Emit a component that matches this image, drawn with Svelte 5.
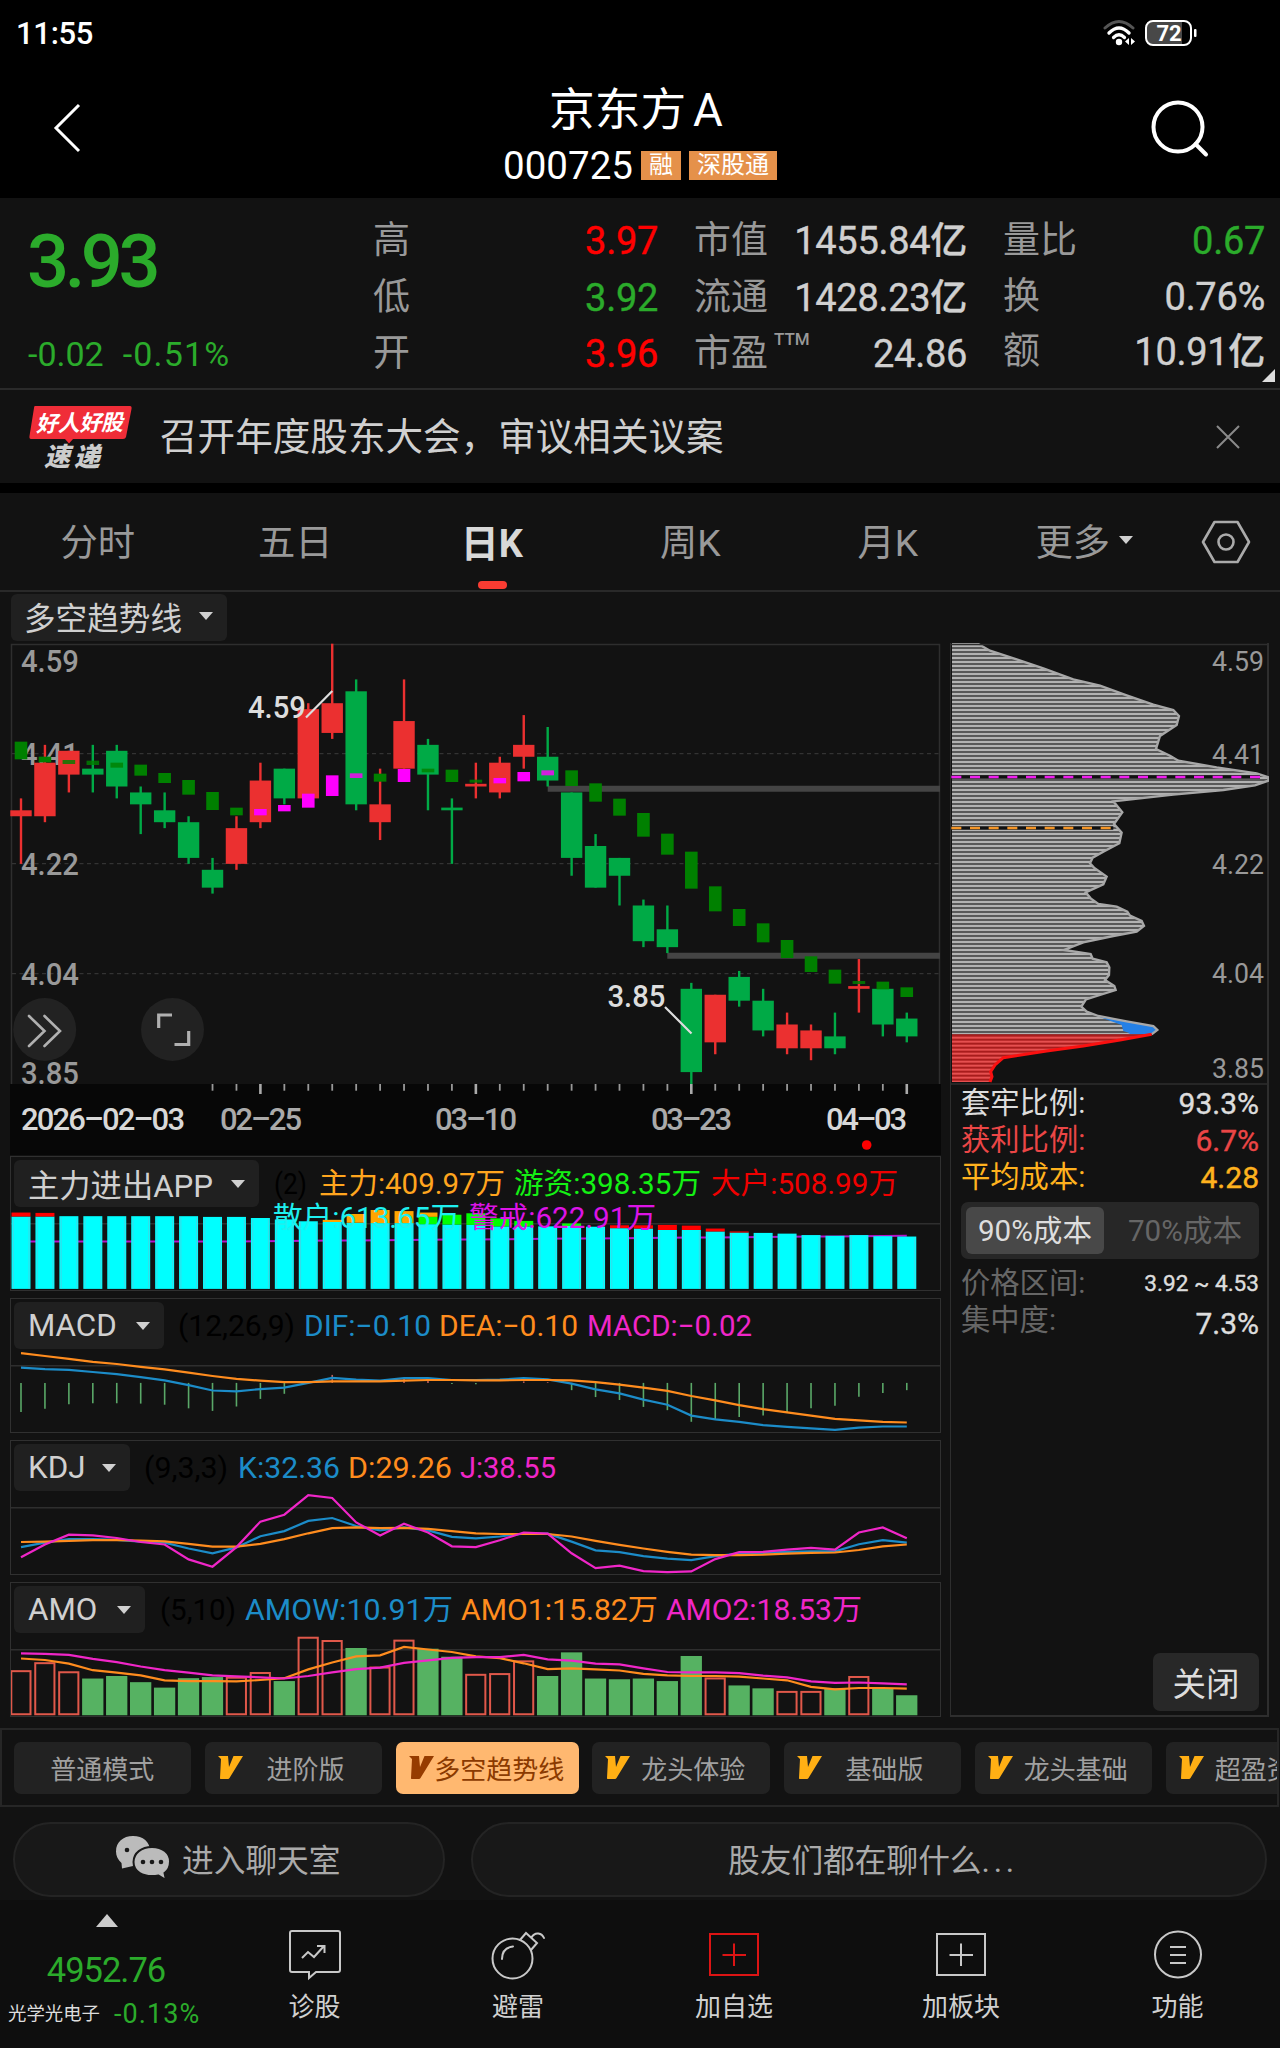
<script>
    const STEP = 23.94;
    const cx = (i) => 21 + i * STEP;
    const priceY = (p) => 643.7 + (459 - p) * 5.95;

    // [up, high, body top, body bottom, low] in cents
    const candles = [
        [1, 433, 431, 430, 422], [1, 442, 439, 430, 429], [1, 441, 441, 437, 434], [0, 442, 438, 437, 434],
        [0, 442, 441, 435, 433], [0, 435, 434, 432, 427], [0, 434, 431, 429, 428], [0, 430, 429, 423, 422],
        [0, 423, 421, 418, 417], [1, 430, 428, 422, 421], [1, 439, 436, 429, 428], [0, 438, 438, 433, 432],
        [1, 449, 448, 433, 433], [1, 459, 449, 444, 443], [0, 453, 451, 432, 431], [1, 438, 432, 429, 426],
        [1, 453, 446, 438, 438], [0, 443, 442, 437, 431], [0, 433, 431, 431, 422], [1, 439, 435, 435, 433],
        [1, 440, 439, 434, 433], [1, 447, 442, 440, 438], [0, 445, 440, 436, 435], [0, 434, 434, 423, 420],
        [0, 427, 425, 418, 418], [0, 423, 423, 420, 415], [0, 416, 415, 409, 408], [0, 415, 411, 408, 407],
        [0, 402, 401, 387, 385], [1, 400, 400, 392, 390], [0, 404, 403, 399, 398], [0, 401, 399, 394, 393],
        [1, 397, 395, 391, 390], [1, 395, 394, 391, 389], [0, 397, 393, 391, 390], [1, 406, 401, 401, 397],
        [0, 401, 401, 395, 393], [0, 397, 396, 393, 392]
    ];

    // trend blocks: [top, bottom, rising]
    const trend = [
        [335, 388], [380, 397], [390, 402], [392, 405], [398, 413], [404, 437], [429, 459], [450, 494],
        [486, 540], [533, 556], [537, 556, 1], [525, 544, 1], [491, 533, 1], [436, 498, 1], [430, 444, 1],
        [431, 455], [417, 456, 1], [416, 427], [419, 456], [449, 458], [444, 460, 1], [426, 454, 1],
        [421, 436, 1], [421, 468], [460, 515], [506, 557], [549, 620], [611, 674], [665, 776], [769, 844],
        [837, 888], [880, 937], [930, 984], [979, 1026], [1019, 1061], [1053, 1062], [1055, 1078], [1072, 1101]
    ];

    const axisLabels = [["4.59", 672], ["4.41", 764.5], ["4.22", 875], ["4.04", 985], ["3.85", 1083.5]];
    const costLabels = [["4.59", 670.7], ["4.41", 764], ["4.22", 874.3], ["4.04", 983.3], ["3.85", 1077.7]];
    const dates = [
        ["2026-02-03", 21, 164, "#d8d8d8"],
        ["02-25", 220, 82, "#aaa"],
        ["03-10", 435, 82, "#aaa"],
        ["03-23", 651, 81, "#aaa"],
        ["04-03", 826, 81, "#d8d8d8"]
    ];
    const ticks = Array.from({ length: 30 }, (_, k) => k + 8);

    // chip distribution outline
    const grayPts = "36,42 115,42 150,62 230,88 310,115 400,148 480,167 560,196 640,224 700,240 717,258 710,285 660,318 648,357 690,377 715,392 830,412 950,430 985,442 985,452 945,466 850,480 700,494 520,514 547,547 522,582 545,608 538,640 490,665 458,683 450,700 462,713 500,740 490,763 437,787 452,805 475,822 530,830 562,845 570,857 605,873 612,888 590,905 520,918 430,937 372,960 452,972 458,986 500,997 508,1012 507,1035 495,1050 523,1068 527,1080 480,1095 438,1108 424,1130 440,1145 475,1158 560,1174 640,1188 652,1200 635,1213";
    const redPts = "635,1213 540,1230 430,1248 320,1263 190,1283 165,1305 152,1325 156,1340 150,1356";
    const stripes = Array.from({ length: 110 }, (_, k) => 44 + k * 12);

    const SCALE = 134.5 / 370;
    const points = (vals, base) => vals.map((v, i) => `${(i * STEP + 10).toFixed(1)},${((v - base) * SCALE - 0.8).toFixed(1)}`).join(" ");

    const cyan = [183, 183, 182, 182, 182, 182, 182, 182, 184, 184, 187, 191, 196, 198, 200, 201, 201, 204, 205, 206, 210, 210, 210, 209, 211, 215, 216, 220, 220, 224, 227, 228, 230, 234, 236, 234, 237, 238];
    const caps = [
        [0, 172, 183, "#f00"], [1, 173, 183, "#f00"], [13, 192, 198, "#ffa500"], [14, 176, 200, "#ffa500"],
        [15, 165, 201, "#ffa500"], [16, 168, 201, "#ffa500"], [17, 172, 184, "#ffa500"], [17, 184, 204, "#0f0"],
        [18, 178, 205, "#0f0"], [19, 174, 206, "#0f0"], [20, 188, 210, "#0f0"], [21, 195, 210, "#0f0"],
        [23, 202, 209, "#0f0"], [25, 207, 215, "#f00"], [26, 207, 216, "#f00"], [27, 206, 220, "#f00"],
        [28, 208, 220, "#f00"], [29, 216, 224, "#f00"], [30, 224, 227, "#f00"]
    ];
    const warn = cyan.map((_, i) => (i < 9 ? 252 : 252 - (i - 8) * 0.55));

    const dea = [558, 566, 574, 582, 588, 596, 603, 612, 621, 629, 634, 638, 638, 636, 636, 636, 634, 632, 632, 633, 633, 632, 632, 633, 638, 645, 653, 662, 676, 688, 701, 712, 721, 730, 739, 743, 747, 749];
    const dif = [598, 602, 604, 610, 616, 624, 633, 646, 661, 663, 657, 653, 640, 626, 631, 634, 627, 627, 632, 632, 631, 627, 630, 642, 658, 669, 686, 700, 730, 740, 747, 756, 761, 765, 769, 763, 760, 760];
    const hist = [720, 711, 699, 696, 696, 697, 700, 710, 717, 705, 684, 670, 640, 618, 640, 640, 627, 634, 643, 644, 640, 636, 638, 660, 679, 687, 706, 715, 747, 741, 734, 730, 720, 710, 703, 678, 668, 660];

    const kLine = [1092, 1080, 1070, 1070, 1072, 1077, 1080, 1096, 1109, 1093, 1062, 1048, 1020, 1012, 1034, 1046, 1038, 1046, 1064, 1068, 1063, 1055, 1055, 1077, 1101, 1106, 1117, 1124, 1128, 1117, 1110, 1108, 1105, 1104, 1104, 1084, 1073, 1080];
    const dLine = [1078, 1077, 1075, 1073, 1073, 1074, 1076, 1083, 1091, 1091, 1083, 1070, 1054, 1040, 1038, 1040, 1039, 1042, 1048, 1054, 1056, 1056, 1056, 1063, 1075, 1086, 1096, 1105, 1113, 1114, 1114, 1113, 1110, 1108, 1107, 1100, 1090, 1085];
    const jLine = [1120, 1085, 1058, 1060, 1067, 1078, 1085, 1126, 1146, 1092, 1022, 1003, 949, 957, 1024, 1060, 1028, 1052, 1090, 1092, 1073, 1052, 1055, 1109, 1150, 1143, 1158, 1161, 1159, 1125, 1106, 1105, 1099, 1094, 1099, 1052, 1038, 1068];

    const amo = [1430, 1408, 1433, 1453, 1446, 1463, 1478, 1452, 1449, 1448, 1435, 1460, 1338, 1347, 1369, 1420, 1346, 1371, 1393, 1440, 1438, 1403, 1446, 1381, 1453, 1455, 1453, 1460, 1391, 1450, 1472, 1480, 1487, 1487, 1480, 1446, 1480, 1499];
    const amoUp = [0, 1, 2, 9, 10, 12, 13, 15, 16, 19, 20, 21, 29, 32, 33, 35];
    const amo1 = [1398, 1402, 1412, 1430, 1437, 1444, 1458, 1460, 1460, 1461, 1457, 1452, 1428, 1409, 1392, 1389, 1366, 1373, 1380, 1392, 1397, 1411, 1427, 1425, 1428, 1431, 1440, 1444, 1446, 1446, 1448, 1453, 1458, 1476, 1483, 1479, 1479, 1481];
    const amo2 = [1384, 1385, 1388, 1399, 1408, 1420, 1430, 1437, 1444, 1447, 1450, 1453, 1446, 1436, 1427, 1423, 1410, 1403, 1396, 1394, 1394, 1388, 1400, 1404, 1412, 1414, 1425, 1435, 1436, 1436, 1438, 1445, 1450, 1461, 1465, 1464, 1466, 1469];

    const blue = "#1c8cc8";
    const orange = "#ff8c1e";
    const pink = "#f026c8";

    // legend entries: [text, x, width, colour, second row]
    const panels = [
        {
            id: "flow", name: "主力进出APP", width: 245, base: 17,
            legend: [
                ["(2)", 263, 33, "#000"], ["主力:409.97万", 308, 186, "#ffa51e"], ["游资:398.35万", 503, 187, "#14f014"],
                ["大户:508.99万", 700, 187, "#f00000"], ["散户:613.65万", 262, 187, "#1ef0f0", 1], ["警戒:622.91万", 458, 187, "#dc14e6", 1]
            ],
            lines: []
        },
        {
            id: "macd", name: "MACD", width: 150, base: 407,
            legend: [["(12,26,9)", 167, 117, "#000"], ["DIF:−0.10", 293, 127, blue], ["DEA:−0.10", 428, 139, orange], ["MACD:−0.02", 576, 165, pink]],
            lines: [[dif, blue], [dea, orange]]
        },
        {
            id: "kdj", name: "KDJ", width: 116, base: 798,
            legend: [["(9,3,3)", 133, 84, "#000"], ["K:32.36", 227, 102, blue], ["D:29.26", 337, 104, orange], ["J:38.55", 449, 96, pink]],
            lines: [[kLine, blue], [dLine, orange], [jLine, pink]]
        },
        {
            id: "amo", name: "AMO", width: 131, base: 1188,
            legend: [["(5,10)", 149, 76, "#000"], ["AMOW:10.91万", 234, 208, blue], ["AMO1:15.82万", 450, 197, orange], ["AMO2:18.53万", 655, 196, pink]],
            lines: [[amo1, orange], [amo2, pink]]
        }
    ];

    const tabs = ["分时", "五日", "日K", "周K", "月K"];
    let tab = "日K";

    const modes = ["普通模式", "进阶版", "多空趋势线", "龙头体验", "基础版", "龙头基础", "超盈资金"];
    let mode = "多空趋势线";
</script>

<div class="app">
    <header>
        <div class="status">
            <span class="clock">11:55</span>
            <svg class="wifi" width="34" height="28" viewBox="0 0 34 28" fill="none" stroke-linecap="round">
                <path d="M2 9 Q16 -4 30 9" stroke="#555" stroke-width="3" />
                <path d="M6 14 Q16 4 26 14" stroke="#fff" stroke-width="3.4" />
                <path d="M10.500 18.500 Q16 13 21.500 18.500" stroke="#fff" stroke-width="3.2" />
                <circle cx="16" cy="23" r="3.200" fill="#fff" />
                <path d="M26 19v7l-4-3.500zM28 19v7l4-3.500z" fill="#fff" />
            </svg>
            <svg class="battery" width="54" height="28" viewBox="0 0 54 28">
                <path d="M8 3H38V25H8Q3 25 3 20V8Q3 3 8 3Z" fill="#484848" />
                <rect x="2" y="2" width="45" height="24" rx="7" fill="none" stroke="#fff" stroke-width="2" />
                <rect x="50" y="10" width="2.500" height="8" rx="1" fill="#fff" />
                <text x="25" y="22" text-anchor="middle" font-size="22" font-weight="700" fill="#fff">72</text>
            </svg>
        </div>
        <div class="titlebar">
            <svg width="80" height="60" viewBox="0 0 80 60" fill="none" stroke="#fff" stroke-width="3">
                <path d="M66 7 43 30 66 53" />
            </svg>
            <div class="title">
                <h1>京东方<span>A</span></h1>
                <div class="code">000725 <em>融</em><em>深股通</em></div>
            </div>
            <svg width="80" height="60" viewBox="0 0 80 60" fill="none" stroke="#fff" stroke-width="4">
                <circle cx="31" cy="29" r="24.500" />
                <path d="M48.500 46 59 56.500" stroke-linecap="round" />
            </svg>
        </div>
    </header>

    <section class="quote">
        <div class="last">
            <strong>3.93</strong>
            <div><span>-0.02</span><span class="pct">-0.51%</span></div>
        </div>
        <dl class="c1">
            <dt>高</dt><dd class="red">3.97</dd>
            <dt>低</dt><dd class="green">3.92</dd>
            <dt>开</dt><dd class="red">3.96</dd>
        </dl>
        <dl class="c2">
            <dt>市值</dt><dd>1455.84<b>亿</b></dd>
            <dt>流通</dt><dd>1428.23<b>亿</b></dd>
            <dt>市盈<sup>TTM</sup></dt><dd>24.86</dd>
        </dl>
        <dl class="c3">
            <dt>量比</dt><dd class="green">0.67</dd>
            <dt>换</dt><dd>0.76%</dd>
            <dt>额</dt><dd>10.91<b>亿</b></dd>
        </dl>
        <i class="corner"></i>
    </section>

    <section class="news">
        <svg width="110" height="72" viewBox="26 400 110 72">
            <path d="M36 405H131Q133 405 132.500 408L127 436Q126.500 438 124 438H74L70 442.500 66 438H32Q30 438 30.500 435L35 407Q35 405 36 405Z" fill="#f02d38" />
            <text x="37" y="430" font-size="22" font-weight="700" font-style="italic" fill="#fff" textLength="87" transform="rotate(-1 80 425)">好人好股</text>
            <text x="45" y="465" font-size="26" font-weight="900" font-style="italic" fill="#ccc" textLength="56">速递</text>
        </svg>
        <p>召开年度股东大会，审议相关议案</p>
        <svg width="24" height="24" viewBox="0 0 24 24" stroke="#8a8a8a" stroke-width="2"><path d="M1 1 23 23M23 1 1 23" /></svg>
    </section>

    <nav class="tabs">
        {#each tabs as t}
            <button class:active={t === tab} on:click={() => (tab = t)}>{t}</button>
        {/each}
        <button class="more">更多<i class="caret"></i></button>
        <svg width="50" height="46" viewBox="0 0 50 46" fill="none" stroke="#aaa" stroke-width="2.600">
            <path d="M13.500 3H36.500L48 23 36.500 43H13.500L2 23Z" stroke-linejoin="round" />
            <circle cx="25" cy="23" r="7.500" />
        </svg>
    </nav>

    <div class="toolbar">
        <button class="drop">多空趋势线<i class="caret"></i></button>
    </div>

    <main>
        <div class="charts">
            <div class="kline">
                <svg width="931" height="512" viewBox="10 643 931 512">
                    <rect x="10" y="1084" width="931" height="72" fill="#070707" />
                    <path d="M11.500 1084V644.500H939.500V1084" fill="none" stroke="#2e2e2e" stroke-width="1.500" />
                    <path d="M12 753.700H939M12 863.700H939M12 973.700H939" stroke="#333" stroke-width="1.300" stroke-dasharray="4 3.500" />
                    <g font-size="31" font-weight="500" fill="#999">
                        {#each axisLabels as [text, y]}
                            <text x="21" {y} textLength="58" lengthAdjust="spacingAndGlyphs">{text}</text>
                        {/each}
                    </g>
                    <path d="M547.700 788.800H940M667.300 955.700H940" stroke="#444" stroke-width="6" />
                    {#each candles as [up, high, top, bottom, low], i}
                        {@const h = Math.max((top - bottom) * 5.95, 2.7)}
                        <g fill={up ? "#eb3030" : "#00aa46"}>
                            <rect x={cx(i) - 1.2} y={priceY(high)} width="2.400" height={(high - low) * 5.95} />
                            <rect x={cx(i) - 10.7} y={priceY(bottom) - h} width="21.400" height={h} />
                        </g>
                    {/each}
                    {#each trend as [top, bottom, rising], i}
                        <rect x={cx(i) - 6.3} y={630 + top / 3} width="12.600" height={(bottom - top) / 3} fill={rising ? "#ff00ff" : "#008000"} fill-opacity={bottom - top < 16 ? 0.82 : 1} />
                    {/each}
                    {#each ticks as i}
                        {@const major = (i - 10) % 9 === 0}
                        <path d="M{cx(i)} 1084v{major ? 10 : 6.7}" stroke={major ? "#aaa" : "#999"} stroke-width={major ? 2.6 : 1.8} />
                    {/each}
                    <path d="M306 717.500 332.300 691M665 1007 691.500 1033.500" stroke="#ddd" stroke-width="2.200" />
                    <g font-size="31" font-weight="500" fill="#ddd">
                        <text x="248" y="717.500" textLength="58" lengthAdjust="spacingAndGlyphs">4.59</text>
                        <text x="607.500" y="1007" textLength="58" lengthAdjust="spacingAndGlyphs">3.85</text>
                    </g>
                    <g font-size="31" font-weight="500">
                        {#each dates as [text, x, w, fill]}
                            <text {x} y="1130" {fill} textLength={w}>{text.replaceAll("-", "–")}</text>
                        {/each}
                    </g>
                    <circle cx="866.700" cy="1145" r="4.800" fill="#f00" />
                    <circle cx="44.700" cy="1029.500" r="31.500" fill="#222" />
                    <circle cx="172.500" cy="1029.500" r="31.500" fill="#222" />
                    <g fill="none" stroke="#b0b0b0" stroke-width="2.600" stroke-linecap="round">
                        <path d="M29 1016 44.500 1031 29 1046M44.500 1016 60 1031 44.500 1046" />
                        <path d="M158.700 1028V1015H172M188.700 1031V1044.500H174.500" stroke-width="3.200" stroke-linecap="butt" />
                    </g>
                </svg>
            </div>

            {#each panels as p}
                <div class="panel">
                    <svg width="929" height="135" viewBox="0 0 929 135">
                        <path d="M0 66.800H929" stroke="#2e2e2e" stroke-width="1.500" />
                        {#if p.id === "flow"}
                            <polyline points={points(warn, p.base)} fill="none" stroke="#b414c8" stroke-width="2" />
                            {#each cyan as v, i}
                                <rect x={i * STEP + 0.5} y={(v - p.base) * SCALE - 0.8} width="19" height={(382 - v) * SCALE} fill="#0ff" />
                                <path d="M{i * STEP + 2.3} {(v - p.base) * SCALE}V131.700M{i * STEP + 18} {(v - p.base) * SCALE}V131.700" stroke="#5cd" stroke-width="0.700" />
                            {/each}
                            {#each caps as [i, top, bottom, fill]}
                                <rect x={i * STEP + 0.5} y={(top - p.base) * SCALE - 0.8} width="19" height={(bottom - top) * SCALE} {fill} />
                            {/each}
                        {:else if p.id === "macd"}
                            {#each hist as v, i}
                                <path d="M{i * STEP + 10} {(640 - p.base) * SCALE - 0.8}V{(v - p.base) * SCALE - 0.8}" stroke={v < 640 ? "#c0605a" : "#5aa868"} stroke-width="1.600" />
                            {/each}
                        {:else if p.id === "amo"}
                            {#each amo as v, i}
                                {#if amoUp.includes(i)}
                                    <rect x={i * STEP + 0.3} y={(v - p.base) * SCALE + 0.2} width="19.200" height={(1554 - v) * SCALE - 2} fill="none" stroke="#e0584a" stroke-width="2" />
                                {:else}
                                    <rect x={i * STEP - 0.7} y={(v - p.base) * SCALE - 0.8} width="21.300" height={(1554 - v) * SCALE} fill="#56b262" />
                                {/if}
                            {/each}
                        {/if}
                        {#each p.lines as [vals, stroke]}
                            <polyline points={points(vals, p.base)} fill="none" {stroke} stroke-width="2.200" />
                        {/each}
                        {#each p.legend as [text, x, w, fill, second]}
                            <text {x} y={second ? 71 : 36.5} {fill} font-size="29" textLength={w} lengthAdjust="spacingAndGlyphs">{text}</text>
                        {/each}
                    </svg>
                    <button class="drop" style="width: {p.width}px">{p.name}<i class="caret"></i></button>
                </div>
            {/each}
        </div>

        <aside>
            <svg width="318" height="442" viewBox="951 643 318 442">
                <defs>
                    <clipPath id="held"><polygon points="{grayPts} 36,1213" /></clipPath>
                    <clipPath id="gain"><polygon points="{redPts} 36,1356 36,1213" /></clipPath>
                </defs>
                <g transform="translate(940 630) scale(0.33333)">
                    <g clip-path="url(#held)">
                        <rect x="36" y="40" width="960" height="1180" fill="#2c2c2c" />
                        {#each stripes as y}
                            <rect x="36" {y} width="960" height="8" fill="#b2b2b2" />
                        {/each}
                        <path d="M470 1158 510 1172 545 1185 550 1203 570 1210 530 1224H660V1170Z" fill="#2480e6" />
                    </g>
                    <g clip-path="url(#gain)">
                        <rect x="36" y="1210" width="620" height="150" fill="#a81c1c" />
                        {#each stripes as y}
                            <rect x="36" {y} width="620" height="6" fill="#e65050" />
                        {/each}
                    </g>
                    <polyline points={grayPts} fill="none" stroke="#a8a8a8" stroke-width="7" />
                    <polyline points={redPts} fill="none" stroke="#fa1010" stroke-width="9" />
                    <path d="M36 441H960M36 594H520" stroke="#111" stroke-width="11" />
                    <path d="M34 441H975" stroke="#f01ef0" stroke-width="8" stroke-dasharray="30 26" />
                    <path d="M34 594H512" stroke="#f59628" stroke-width="8" stroke-dasharray="30 26" />
                </g>
                <path d="M951 644.500H1269M951 1084H1269" stroke="#2e2e2e" stroke-width="1.500" />
                <g font-size="28" fill="#999">
                    {#each costLabels as [text, y]}
                        <text x="1212" {y} textLength="52" lengthAdjust="spacingAndGlyphs">{text}</text>
                    {/each}
                </g>
            </svg>
            <div class="stats">
                <div class="row"><span>套牢比例:</span><b>93.3%</b></div>
                <div class="row loss"><span>获利比例:</span><b>6.7%</b></div>
                <div class="row avg"><span>平均成本:</span><b>4.28</b></div>
                <div class="segment">
                    <button class="on">90%成本</button>
                    <button>70%成本</button>
                </div>
                <div class="row dim"><span>价格区间:</span><b class="small">3.92 ~ 4.53</b></div>
                <div class="row dim"><span>集中度:</span><b class="low">7.3%</b></div>
            </div>
            <button class="shut">关闭</button>
        </aside>
    </main>

    <div class="modes">
        {#each modes as m, i}
            <button class:active={m === mode} class:vip={i > 0} on:click={() => (mode = m)}>
                {#if i > 0}
                    <svg width="25" height="23" viewBox="0 0 25 23"><path d="M0 0H10L11 11 15.500 0H25L11.500 22Q11 23 10 23H2.500Q2 23 2 22L3 3Z" fill="currentColor" /></svg>
                {/if}
                <span>{m}</span>
            </button>
        {/each}
    </div>

    <div class="chat">
        <button class="room">
            <svg width="55" height="44" viewBox="0 0 55 44">
                <path d="M17 0C27 0 34 6 34 14.500S27 30 17 30L6 32.500 5.500 27C2 24 0 20 0 15.500 0 6 7 0 17 0Z" fill="#bbb" />
                <path d="M36 11C46.500 11 54 17 54 25.500 54 31 51.500 35 48.500 37L50 44 42.500 39.500C26 42 17.500 35 17.500 26 17.500 17 25.500 11 36 11Z" fill="#bbb" stroke="#181818" stroke-width="2" />
                <g fill="#181818">
                    <circle cx="11" cy="14" r="2.300" />
                    <circle cx="27" cy="26" r="2.300" /><circle cx="36" cy="26" r="2.300" /><circle cx="45" cy="26" r="2.300" />
                </g>
            </svg>
            进入聊天室
        </button>
        <button class="talk">股友们都在聊什么<span>...</span></button>
    </div>

    <footer>
        <div class="index">
            <i class="up"></i>
            <strong>4952.76</strong>
            <div><small>光学光电子</small><span>-0.13%</span></div>
        </div>
        <button>
            <svg width="54" height="54" viewBox="0 0 54 54" fill="none" stroke="#c8c8c8" stroke-width="2">
                <path d="M4 3H50Q52 3 52 5V42Q52 44 50 44H28L21 50V44H4Q2 44 2 42V5Q2 3 4 3Z" />
                <path d="M14 30 20 24 26 29 36 18M29 18H36.500V25" />
            </svg>
            诊股
        </button>
        <button>
            <svg width="54" height="54" viewBox="0 0 54 54" fill="none" stroke="#c8c8c8" stroke-width="2">
                <circle cx="21.500" cy="30.500" r="20" />
                <path d="M11 31Q11 20 22 18.500M29 12 35 5 46 15 40 22M40.500 9.500C44 3 51 5 53 10" stroke-linecap="round" />
            </svg>
            避雷
        </button>
        <button>
            <svg width="54" height="54" viewBox="0 0 54 54" fill="none" stroke="#dc1414" stroke-width="2">
                <rect x="3" y="6" width="48" height="41" /><path d="M27 15.500V38M15.500 27H39" />
            </svg>
            加自选
        </button>
        <button>
            <svg width="54" height="54" viewBox="0 0 54 54" fill="none" stroke="#c8c8c8" stroke-width="2">
                <rect x="3" y="6" width="48" height="41" /><path d="M27 15.500V38M15.500 27H39" />
            </svg>
            加板块
        </button>
        <button>
            <svg width="54" height="54" viewBox="0 0 54 54" fill="none" stroke="#c8c8c8" stroke-width="2">
                <circle cx="27" cy="26.500" r="23" /><path d="M19 19H35M19 27H35M19 35H35" />
            </svg>
            功能
        </button>
    </footer>
</div>

<style>
    :global(body) {
        background: #121212;
    }

    .app {
        width: 1280px;
        height: 2048px;
        overflow: hidden;
        display: flex;
        flex-direction: column;
        background: #121212;
        color: #d0d0d0;
        font-family: Roboto, "Noto Sans CJK SC", sans-serif;
    }

    svg {
        display: block;
        flex: none;
    }

    button {
        padding: 0;
        border: none;
        background: none;
        color: inherit;
        font: inherit;
        white-space: nowrap;
        cursor: pointer;
    }

    header {
        height: 198px;
        flex: none;
        background: #000;
        color: #fff;
    }

    .status {
        display: flex;
        align-items: center;
        height: 65px;
        padding: 0 82px 0 16px;
    }

    .clock {
        flex: 1;
        padding-top: 1px;
        font-size: 31px;
        font-weight: 500;
        letter-spacing: -0.3px;
    }

    .wifi {
        margin-right: 7px;
    }

    .titlebar {
        display: flex;
        justify-content: space-between;
        padding: 20px 53px 0 13px;
    }

    .titlebar > svg {
        margin-top: 13px;
    }

    .title {
        padding-left: 40px;
        text-align: center;
    }

    h1 {
        margin: 1px 8px -1px 0;
        font-size: 45.7px;
        line-height: 50px;
        font-weight: 400;
    }

    h1 span {
        margin-left: 7px;
    }

    .code {
        display: flex;
        align-items: center;
        gap: 8px;
        font-size: 38.5px;
        line-height: 61px;
        height: 61px;
    }

    .code em {
        padding: 0 8px;
        font-size: 24px;
        line-height: 29px;
        font-style: normal;
        background: #e5914a;
    }

    .quote {
        position: relative;
        display: flex;
        height: 190px;
        flex: none;
        border-bottom: 2px solid #2a2a2a;
    }

    .last {
        width: 346px;
        box-sizing: border-box;
        flex: none;
        padding: 28px 0 0 27px;
        margin-right: 27px;
        color: #2bab2b;
    }

    .last strong {
        display: block;
        font-size: 74px;
        line-height: 72px;
        font-weight: 500;
        letter-spacing: -4.4px;
    }

    .last div {
        display: flex;
        gap: 19px;
        margin-top: 36px;
        padding-left: 1px;
        font-size: 34px;
        line-height: 40px;
    }

    .pct {
        letter-spacing: 1.2px;
    }

    dl {
        display: grid;
        grid-template-columns: 74px 1fr;
        grid-auto-rows: 56.5px;
        flex: none;
        margin: 15px 0 0;
        font-size: 37px;
        line-height: 56px;
        white-space: nowrap;
    }

    dt {
        color: #999;
    }

    dd {
        margin: 0;
        text-align: right;
        font-size: 38px;
        letter-spacing: -0.3px;
        -webkit-text-stroke: 0.4px;
    }

    dd b {
        font-size: 37px;
        font-weight: 500;
    }

    sup {
        margin-left: 6px;
        font-size: 17px;
        font-weight: 500;
        line-height: 1;
        vertical-align: 21px;
    }

    .c1 {
        width: 285px;
    }

    .c2 {
        width: 273px;
        margin-left: 36px;
    }

    .c3 {
        width: 262px;
        margin-left: 36px;
        grid-auto-rows: 55.5px;
    }

    .red {
        color: #ff0000;
    }

    .green {
        color: #2bab2b;
    }

    .corner {
        position: absolute;
        right: 5px;
        bottom: 6px;
        border-left: 13px solid transparent;
        border-bottom: 13px solid #ddd;
    }

    .news {
        display: flex;
        align-items: center;
        height: 93px;
        flex: none;
        padding: 0 40px 0 25px;
        border-bottom: 10px solid #000;
    }

    .news p {
        flex: 1;
        margin: 0 0 0 25px;
        font-size: 37.6px;
        line-height: 50px;
    }

    .tabs {
        display: flex;
        align-items: center;
        height: 97px;
        flex: none;
        padding-right: 29px;
        border-bottom: 2px solid #292929;
    }

    .tabs > svg {
        margin-left: auto;
    }

    .tabs button {
        position: relative;
        width: 197.5px;
        height: 97px;
        flex: none;
        padding: 0 2px 3px 0;
        box-sizing: border-box;
        font-size: 37.3px;
        color: #999;
    }

    .tabs .active {
        padding-right: 4px;
        color: #d8d8d8;
        font-weight: 700;
        font-size: 38px;
    }

    .tabs .active::after {
        content: "";
        position: absolute;
        left: 83px;
        bottom: 1px;
        width: 29px;
        height: 8px;
        border-radius: 4px;
        background: #fa3c32;
    }

    .tabs .more {
        display: flex;
        align-items: center;
        gap: 9px;
        width: 165px;
        padding-left: 48px;
    }

    .caret {
        flex: none;
        border: 7px solid transparent;
        border-top: 8px solid #d0d0d0;
        border-bottom: none;
    }

    .toolbar {
        height: 51px;
        flex: none;
        padding: 2px 11px 0;
        box-sizing: border-box;
    }

    .drop {
        display: flex;
        align-items: center;
        justify-content: space-between;
        height: 47px;
        padding: 0 14px 0 14px;
        box-sizing: border-box;
        border-radius: 6px;
        background: #202020;
        font-size: 31.3px;
    }

    .toolbar .drop {
        width: 216px;
        padding: 0 14px 3px 13px;
        font-size: 31.6px;
    }

    main {
        display: flex;
        justify-content: space-between;
        height: 1074px;
        flex: none;
        padding: 0 11px 0 10px;
    }

    .charts {
        display: flex;
        flex-direction: column;
        width: 931px;
    }

    .panel {
        position: relative;
        flex: none;
        height: 133px;
        margin: 0 0 7px;
        border: 1px solid #303030;
        overflow: hidden;
    }

    .kline {
        height: 513px;
        flex: none;
    }

    .panel .drop {
        position: absolute;
        left: 3px;
        top: 3px;
    }

    aside {
        display: flex;
        flex-direction: column;
        width: 319px;
        box-sizing: border-box;
        border: solid #2e2e2e;
        border-width: 0 2px 2px 1px;
    }

    .stats {
        padding: 0 8px 0 10px;
    }

    .row {
        display: flex;
        justify-content: space-between;
        align-items: center;
        height: 37px;
        font-size: 29.3px;
        color: #ddd;
        white-space: nowrap;
    }

    .row span {
        padding-bottom: 8px;
    }

    .row b {
        font-size: 30px;
        font-weight: 400;
        -webkit-text-stroke: 0.4px;
    }

    .row .small {
        font-size: 22.6px;
    }

    .row .low {
        padding-top: 6px;
    }

    .row.loss {
        color: #eb4646;
    }

    .row.avg {
        color: #ffb21e;
    }

    .dim span {
        color: #666;
    }

    .segment {
        display: flex;
        height: 57px;
        margin: 6px 0;
        padding: 5px;
        box-sizing: border-box;
        border-radius: 7px;
        background: #272727;
    }

    .segment button {
        flex: 1;
        padding: 0 0 6px 12px;
        border-radius: 6px;
        font-size: 29.6px;
        color: #666;
    }

    .segment .on {
        flex: none;
        width: 138px;
        padding-left: 0;
        background: #484848;
        color: #ddd;
    }

    .shut {
        margin: auto 8px 4px auto;
        width: 106px;
        height: 58px;
        padding-bottom: 2px;
        border-radius: 7px;
        background: #282828;
        font-size: 33.5px;
        color: #ddd;
    }

    .modes {
        display: flex;
        gap: 13.6px;
        height: 79px;
        flex: none;
        margin: 11px 1px 0 0;
        padding: 12px 0 0 11.5px;
        box-sizing: border-box;
        border: 2px solid #262626;
        overflow: hidden;
    }

    .modes button {
        position: relative;
        flex: none;
        width: 177.600px;
        height: 52px;
        padding-bottom: 2px;
        border-radius: 7px;
        background: #222;
        font-size: 26px;
        color: #a0a0a0;
    }

    .modes .vip {
        padding-left: 24px;
    }

    .modes svg {
        position: absolute;
        left: 13px;
        top: 14px;
        color: #ffaf14;
    }

    .modes .active {
        width: 183px;
        background: #ffb870;
        color: #8b3a00;
    }

    .modes .active svg {
        color: #963c00;
    }

    .chat {
        display: flex;
        gap: 26px;
        flex: none;
        padding: 15px 13px 0;
    }

    .chat button {
        height: 75px;
        padding-bottom: 3px;
        box-sizing: border-box;
        border: 2px solid #242424;
        border-radius: 38px;
        background: #181818;
        color: #aaa;
        font-size: 31.7px;
    }

    .room {
        display: flex;
        align-items: center;
        gap: 11px;
        width: 432px;
        padding-left: 101px;
    }

    .chat .talk {
        flex: 1;
        padding-left: 8px;
    }

    .talk span {
        letter-spacing: 3.8px;
    }

    footer {
        display: grid;
        grid-template-columns: 214px 201px 206px 226px 228px 205px;
        flex: 1;
        margin-top: 3px;
        background: #0e0e0e;
    }

    footer button {
        display: flex;
        flex-direction: column;
        align-items: center;
        padding-top: 28px;
        font-size: 26px;
        line-height: 38px;
        gap: 6px;
    }

    .index {
        display: flex;
        flex-direction: column;
        align-items: center;
        padding-top: 14px;
        color: #2bab2b;
    }

    .up {
        border: 11px solid transparent;
        border-bottom: 13px solid #ccc;
        border-top: none;
    }

    .index strong {
        margin: 23px 2px 0 0;
        font-size: 34.5px;
        line-height: 40px;
        font-weight: 400;
        letter-spacing: -1px;
    }

    .index div {
        display: flex;
        align-items: center;
        gap: 14px;
        align-self: flex-start;
        padding-left: 8px;
        margin-top: 6px;
        font-size: 27px;
        line-height: 36px;
    }

    .index div span {
        letter-spacing: 1.1px;
    }

    .index small {
        font-size: 18.4px;
        color: #ddd;
    }
</style>
